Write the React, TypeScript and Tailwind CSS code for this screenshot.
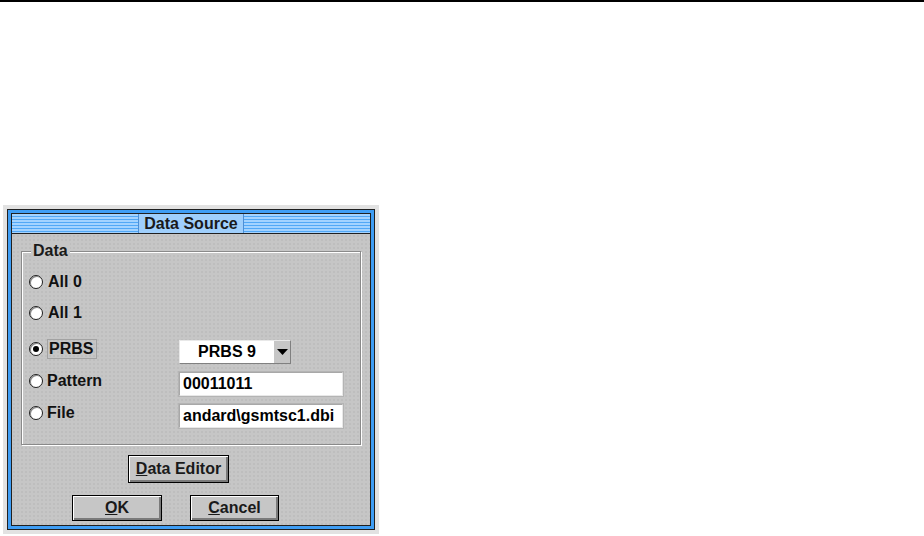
import React from 'react';

const font = { fontFamily: '"Liberation Sans", Arial, sans-serif' };

const Radio: React.FC<{ checked?: boolean }> = ({ checked }) => (
  <span className="w-[14px] h-[14px] rounded-full bg-white border border-[#202020] shadow-[inset_1px_1px_0_#8a8a8a] flex items-center justify-center shrink-0">
    {checked && <span className="w-[6px] h-[6px] rounded-full bg-black" />}
  </span>
);

const TextField: React.FC<{ value: string }> = ({ value }) => (
  <div className="w-[164px] h-[24px] bg-white border border-t-[#a8a8a8] border-l-[#a8a8a8] border-b-[#e8e8e8] border-r-[#e8e8e8] shadow-[0_0_0_1px_#b4b4b4] flex items-center pl-[3px] overflow-hidden whitespace-nowrap text-black">
    {value}
  </div>
);

const Button: React.FC<{ width: string; height: string; children: React.ReactNode }> = ({ width, height, children }) => (
  <div className={`${width} ${height} border border-black bg-[#c6c6c6] shadow-[inset_1px_1px_0_#ffffff,inset_-2px_-2px_0_#7a7a7a] flex items-center justify-center text-[#1a1a1a]`}>
    {children}
  </div>
);

export default function App() {
  return (
    <div className="w-[924px] h-[536px] bg-white overflow-hidden font-bold text-[16px] leading-[18px]" style={font}>
      <div className="h-[2px] bg-black" />

      <div className="ml-[3px] mt-[203px] w-[376px] h-[329px] bg-[#e2e2e2] p-[4px]">
        <div className="h-full border border-[#202020]">
          <div className="h-full border-[3px] border-[#3f9ef5]">
            <div className="h-full border border-[#202020] flex flex-col">
              {/* title bar */}
              <div className="h-[20px] border-b border-[#202020] bg-[repeating-linear-gradient(180deg,#a4d3ff_0px,#a4d3ff_2px,#52a8f6_2px,#52a8f6_3px)] flex justify-center">
                <div className="w-[106px] h-full bg-[#9fcffc] border-x border-[#4d8fd6] flex items-center justify-center text-[#1a1a1a]">
                  Data Source
                </div>
              </div>

              {/* body */}
              <div className="flex-1 bg-[#c6c6c6] bg-[radial-gradient(circle,#b9b9b9_0.6px,transparent_0.9px)] bg-[length:4px_4px] flex flex-col">
                <fieldset className="mt-[8px] mx-[9px] h-[203px] border border-[#8a8a8a] shadow-[1px_1px_0_#ffffff,inset_1px_1px_0_#ffffff]">
                  <legend className="ml-[9px] px-[2px] bg-[#c6c6c6] text-[#1a1a1a]">Data</legend>
                  <div className="pt-[10px] pl-[7px] flex flex-col text-[#111]">
                    <div className="h-[24px] flex items-center">
                      <Radio />
                      <span className="ml-[5px]">All 0</span>
                    </div>
                    <div className="h-[24px] mt-[7px] flex items-center">
                      <Radio />
                      <span className="ml-[5px]">All 1</span>
                    </div>
                    <div className="h-[24px] mt-[15px] flex items-center">
                      <div className="w-[14px] mb-[6px] flex">
                        <Radio checked />
                      </div>
                      <div className="ml-[4px] w-[132px] mb-[6px]">
                        <span className="inline-block border border-[#a2a2a2] pl-[1px] pr-[3px] leading-[18px]">PRBS</span>
                      </div>
                      <div className="w-[112px] h-[24px] flex border border-t-[#e8e8e8] border-l-[#e8e8e8] border-b-[#808080] border-r-[#808080] bg-[#c6c6c6]">
                        <div className="w-[94px] h-full bg-white flex items-center justify-center text-black">PRBS 9</div>
                        <div className="flex-1 flex items-center justify-center">
                          <svg width="11" height="6" viewBox="0 0 11 6">
                            <polygon points="0,0 11,0 5.5,6" fill="#000" />
                          </svg>
                        </div>
                      </div>
                    </div>
                    <div className="h-[24px] mt-[8px] flex items-center">
                      <div className="w-[14px] mb-[6px] flex">
                        <Radio />
                      </div>
                      <span className="ml-[4px] w-[132px] mb-[6px]">Pattern</span>
                      <TextField value="00011011" />
                    </div>
                    <div className="h-[24px] mt-[8px] flex items-center">
                      <div className="w-[14px] mb-[6px] flex">
                        <Radio />
                      </div>
                      <span className="ml-[4px] w-[132px] mb-[6px]">File</span>
                      <TextField value="andard\gsmtsc1.dbi" />
                    </div>
                  </div>
                </fieldset>

                <div className="mt-[10px] ml-[116px]">
                  <Button width="w-[101px]" height="h-[28px]">
                    <span><span className="underline">D</span>ata Editor</span>
                  </Button>
                </div>

                <div className="mt-[12px] flex">
                  <div className="ml-[60px]">
                    <Button width="w-[90px]" height="h-[26px]">
                      <span><span className="underline">O</span>K</span>
                    </Button>
                  </div>
                  <div className="ml-[28px]">
                    <Button width="w-[89px]" height="h-[26px]">
                      <span><span className="underline">C</span>ancel</span>
                    </Button>
                  </div>
                </div>
              </div>
            </div>
          </div>
        </div>
      </div>
    </div>
  );
}
